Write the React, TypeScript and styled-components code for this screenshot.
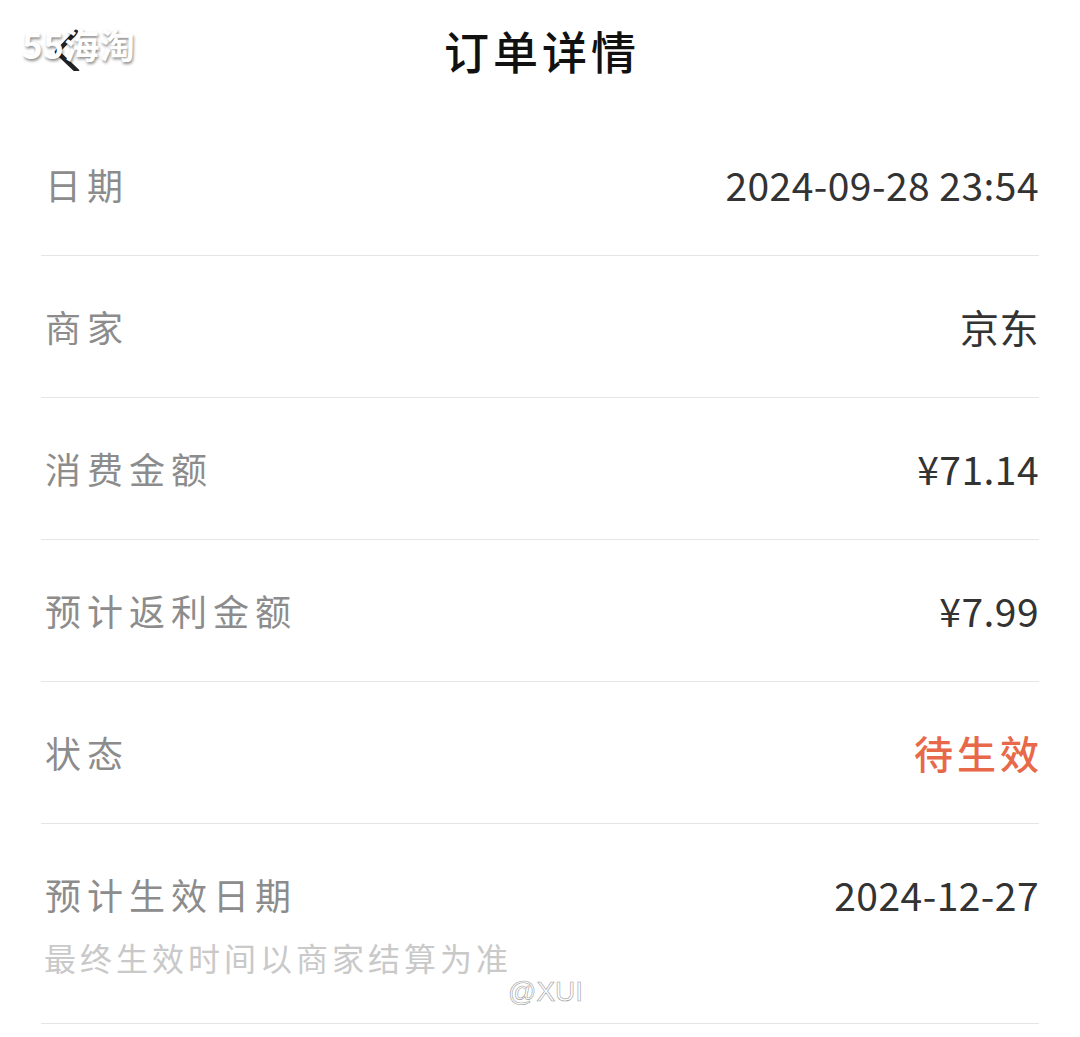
import styled, { createGlobalStyle } from "styled-components";

const GlobalStyle = createGlobalStyle`
  html, body {
    margin: 0;
    padding: 0;
    background: #ffffff;
  }
  body {
    font-family: "Noto Sans CJK SC", "Noto Sans", sans-serif;
  }
`;

type Item = {
  label: string;
  value: string;
  tone?: "normal" | "alert";
  note?: string;
};

const items: Item[] = [
  { label: "日期", value: "2024-09-28 23:54" },
  { label: "商家", value: "京东" },
  { label: "消费金额", value: "¥71.14" },
  { label: "预计返利金额", value: "¥7.99" },
  { label: "状态", value: "待生效", tone: "alert" },
  {
    label: "预计生效日期",
    value: "2024-12-27",
    note: "最终生效时间以商家结算为准",
  },
];

const App = () => {
  return (
    <Page>
      <GlobalStyle />
      <Header>
        <BackButton aria-label="back">
          <svg width="40" height="50" viewBox="0 0 40 50">
            <path
              d="M28 11 L9 31 L29 50"
              fill="none"
              stroke="#222"
              strokeWidth="4.5"
              strokeLinecap="round"
              strokeLinejoin="round"
            />
          </svg>
        </BackButton>
        <Title>订单详情</Title>
      </Header>

      <List>
        {items.map((item) => (
          <Row key={item.label}>
            <LabelCol>
              <Label>{item.label}</Label>
              {item.note ? <Note>{item.note}</Note> : null}
            </LabelCol>
            <Value tone={item.tone ?? "normal"}>{item.value}</Value>
          </Row>
        ))}
      </List>

      {/* watermarks laid over the screenshot */}
      <SiteMark>55海淘</SiteMark>
      <UserMark>@XUI</UserMark>
    </Page>
  );
};

export default App;

const Page = styled.div`
  position: relative;
  width: 1080px;
  height: 1037px;
  overflow: hidden;
  background: #ffffff;
`;

const Header = styled.div`
  position: relative;
  height: 100px;
  margin-bottom: 14px;
  display: flex;
  justify-content: center;
  align-items: center;
`;

const BackButton = styled.div`
  position: absolute;
  left: 48px;
  top: 21px;
  width: 40px;
  height: 60px;
`;

const Title = styled.h1`
  margin: 0 0 0 4px;
  font-size: 45px;
  font-weight: 500;
  letter-spacing: 4px;
  color: #111111;
  line-height: 1;
`;

const List = styled.div`
  padding: 0 41px;
`;

const Row = styled.div`
  display: flex;
  justify-content: space-between;
  align-items: flex-start;
  padding: 46px 0;
  border-bottom: 1px solid #e6e6e6;
`;

const LabelCol = styled.div`
  display: flex;
  flex-direction: column;
  gap: 18px;
`;

const Label = styled.div`
  font-size: 36px;
  line-height: 49px;
  letter-spacing: 6px;
  color: #8c8c8c;
  padding-left: 4px;
`;

const Note = styled.div`
  font-size: 32px;
  line-height: 40px;
  letter-spacing: 4px;
  color: #c9c9c9;
  padding-left: 3px;
`;

const Value = styled.div<{ tone: "normal" | "alert" }>`
  font-size: 39px;
  line-height: 49px;
  font-weight: ${({ tone }) => (tone === "alert" ? 500 : 400)};
  letter-spacing: ${({ tone }) => (tone === "alert" ? "4px" : "0.45px")};
  margin-right: ${({ tone }) => (tone === "alert" ? "-4px" : "0")};
  color: ${({ tone }) => (tone === "alert" ? "#e8684a" : "#333333")};
`;

const SiteMark = styled.div`
  position: absolute;
  left: 22px;
  top: 18px;
  font-size: 35px;
  font-weight: 700;
  color: #ffffff;
  letter-spacing: 0.5px;
  text-shadow: 1px 2px 3px rgba(0, 0, 0, 0.45);
`;

const UserMark = styled.div`
  position: absolute;
  left: 508px;
  top: 976px;
  font-family: "Liberation Sans", sans-serif;
  font-size: 28px;
  color: #ffffff;
  -webkit-text-stroke: 0.6px #a0a0a0;
`;
